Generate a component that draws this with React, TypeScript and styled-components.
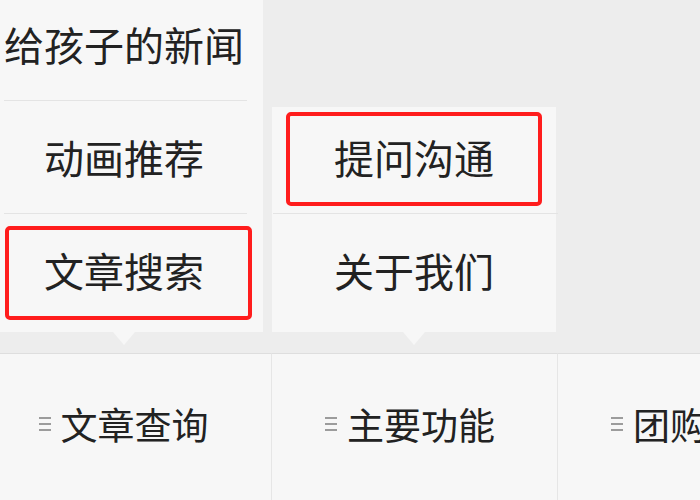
import * as React from 'react'
import styled, { createGlobalStyle } from 'styled-components'

const GlobalStyle = createGlobalStyle`
  html, body {
    margin: 0;
    padding: 0;
    background: #ededed;
  }
  body {
    font-family: 'Noto Sans CJK SC', 'Noto Sans', sans-serif;
    color: #222;
  }
`

type SubMenu = {
  width: number
  offset: number
  inset: number
  items: string[]
  marked?: number
  markBox?: [number, number, number, number]
}

type MenuEntry = {
  label: string
  sub?: SubMenu
}

const menus: MenuEntry[] = [
  {
    label: '文章查询',
    sub: {
      width: 278,
      offset: 0,
      inset: 18,
      items: ['给孩子的新闻', '动画推荐', '文章搜索'],
      marked: 2,
      markBox: [6, 11, 6, 20],
    },
  },
  {
    label: '主要功能',
    sub: {
      width: 284,
      offset: 1,
      inset: 0,
      items: ['提问沟通', '关于我们'],
      marked: 0,
      markBox: [5, 14, 7, 14],
    },
  },
  { label: '团购' },
]

const Screen = styled.div`
  width: 700px;
  height: 500px;
  overflow: hidden;
  background: #ededed;
`

// same column grid for the popups and the bottom bar
const MenuGrid = styled.div`
  display: grid;
  grid-template-columns: repeat(3, 286px);
  grid-template-rows: 353px 147px;
  margin-left: -15px;
`

const PopupSlot = styled.div`
  display: flex;
  flex-direction: column;
  justify-content: flex-end;
  padding-bottom: 21px;
`

const Popup = styled.div<{ $width: number; $offset: number }>`
  position: relative;
  width: ${p => p.$width}px;
  margin-left: ${p => p.$offset}px;
  padding-bottom: 6px;
  background: #f7f7f7;

  &::after {
    content: '';
    position: absolute;
    left: 50%;
    bottom: -13px;
    margin-left: -11px;
    border-left: 11px solid transparent;
    border-right: 11px solid transparent;
    border-top: 13px solid #f7f7f7;
  }
`

const PopupItem = styled.div`
  position: relative;
  box-sizing: border-box;
  height: 106px;
  padding-bottom: 6px;
  display: flex;
  align-items: center;
  justify-content: center;
  font-size: 40px;
  color: #222;
  white-space: nowrap;
`

const Separator = styled.div<{ $inset: number }>`
  height: 1px;
  margin: 0 ${p => p.$inset - 2}px 6px ${p => p.$inset + 1}px;
  background: #e4e4e4;
`

const Mark = styled.div<{ $box: [number, number, number, number] }>`
  position: absolute;
  top: ${p => p.$box[0]}px;
  right: ${p => p.$box[1]}px;
  bottom: ${p => p.$box[2]}px;
  left: ${p => p.$box[3]}px;
  border: 4px solid #ff1d1d;
  border-radius: 5px;
`

const BarCell = styled.div<{ $first: boolean }>`
  display: flex;
  align-items: center;
  justify-content: center;
  gap: 10px;
  padding: 0 9px 6px 0;
  background: #f7f7f7;
  border-top: 1px solid #dedede;
  border-left: ${p => (p.$first ? 'none' : '1px solid #e6e6e6')};
  font-size: 37px;
  color: #222;
  white-space: nowrap;
`

// labels share one width so short names start where long ones do
const BarLabel = styled.span`
  min-width: 148px;
  text-align: left;
`

const MenuIcon = () => (
  <svg width="12" height="16" viewBox="0 0 12 16">
    <g stroke="#9c9c9c" strokeWidth="2">
      <line x1="0" y1="2" x2="12" y2="2" />
      <line x1="0" y1="8" x2="12" y2="8" />
      <line x1="0" y1="14" x2="12" y2="14" />
    </g>
  </svg>
)

const App = () => {
  return (
    <Screen>
      <GlobalStyle />
      <MenuGrid>
        {menus.map(menu => (
          <PopupSlot key={menu.label + '-popup'}>
            {menu.sub && (
              <Popup $width={menu.sub.width} $offset={menu.sub.offset}>
                {menu.sub.items.map((item, i) => (
                  <React.Fragment key={item}>
                    {i > 0 && <Separator $inset={menu.sub!.inset} />}
                    <PopupItem>
                      {item}
                      {menu.sub!.marked === i && menu.sub!.markBox && (
                        <Mark $box={menu.sub!.markBox} />
                      )}
                    </PopupItem>
                  </React.Fragment>
                ))}
              </Popup>
            )}
          </PopupSlot>
        ))}
        {menus.map((menu, i) => (
          <BarCell key={menu.label} $first={i === 0}>
            <MenuIcon />
            <BarLabel>{menu.label}</BarLabel>
          </BarCell>
        ))}
      </MenuGrid>
    </Screen>
  )
}

export default App
